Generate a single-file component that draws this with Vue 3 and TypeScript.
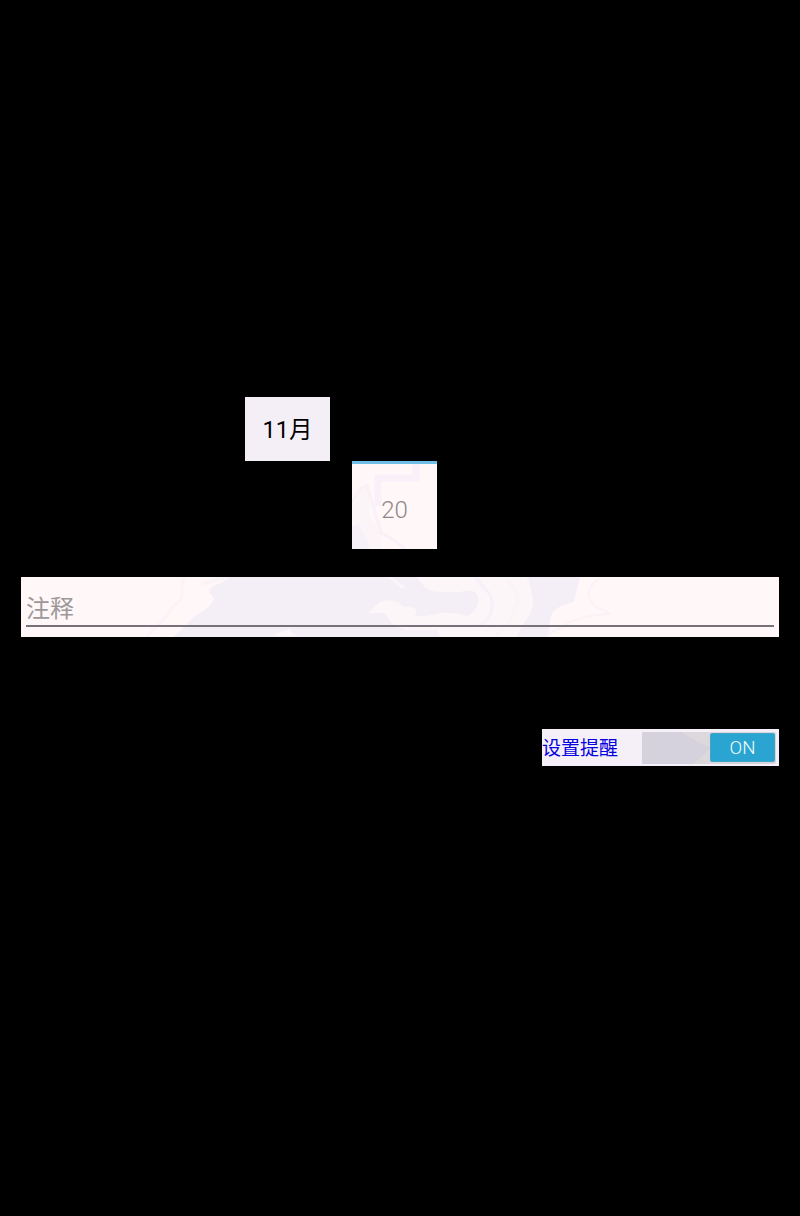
<script setup lang="ts">
import { ref } from 'vue'

const month = ref('11月')
const day = ref('20')
const note = ref('')
const reminder = ref(true)
</script>

<template>
  <main class="screen">
    <section class="pickers">
      <div class="month">{{ month }}</div>
      <div class="day">
        <svg class="art" width="85" height="85" viewBox="0 0 85 85" aria-hidden="true">
          <path d="M0 38C8 33 8 20 15 20C17 34 19 40 17 51C22 60 28 63 29 72L31 85H17L0 56Z" fill="#fcf5f8" />
          <path d="M26 42V14H64V0" fill="none" stroke="#f8f1f9" stroke-width="7" />
          <path d="M15 20C17 34 22 38 23 51C25 56 28 61 29 69C38 72 44 78 53 85" fill="none" stroke="#f8f1f8" stroke-width="3" />
          <path d="M0 38Q7 24 14 21" fill="none" stroke="#f8f1f8" stroke-width="2" />
          <path d="M0 62L6 60Q14 70 18 85H0Z" fill="#f6f0f8" />
        </svg>
        <span class="value">{{ day }}</span>
      </div>
    </section>

    <label class="note">
      <svg class="art" width="758" height="60" viewBox="0 0 758 60" aria-hidden="true">
        <path d="M152 60C163 51 169 43 174 39C182 34 189 31 193 22C193 17 183 17 191 10C199 6 205 4 207 0H507V60Z" fill="#f4eef7" />
        <path d="M163 0C157 13 166 20 155 27C148 31 151 36 143 42L125 60" fill="none" stroke="#fbf3f8" stroke-width="3" />
        <path d="M396 0C402 9 407 15 420 15H439C447 13 455 13 457 20C458 27 456 34 446 39C438 37 430 35 422 36C412 37 404 41 394 38C398 30 389 29 382 30C377 22 366 22 359 25L347 36C355 37 364 34 366 39C369 46 375 51 386 53H417L419 60H496L502 48Q515 30 511 18L506 0Z" fill="#fdf6f8" />
        <path d="M455 0C457 8 472 13 471 29C471 40 465 43 459 49" fill="none" stroke="#f6f0f8" stroke-width="3" />
        <path d="M486 0C487 7 503 19 495 29C491 38 492 41 486 48L475 58" fill="none" stroke="#faf3f8" stroke-width="3" />
        <path d="M507 0H559L554 20C555 28 543 25 534 33C527 39 530 49 527 60H496L503 46Q515 30 511 18Z" fill="#f4eef7" />
        <path d="M578 2C565 10 566 21 573 28C578 33 586 34 589 37C567 38 551 43 546 47L526 58" fill="none" stroke="#f9f2f7" stroke-width="2" />
        <path d="M251 59C258 54 266 55 269 51C269 56 272 57 276 59Z" fill="#fdf6f8" />
        <path d="M366 0H371L384 10L381 12Z" fill="#fbf4f8" />
        <path d="M181 7Q190 3 207 0" fill="none" stroke="#faf3f8" stroke-width="4" />
      </svg>
      <input v-model="note" class="input" type="text" placeholder="注释" />
    </label>

    <section class="reminder">
      <span class="caption">设置提醒</span>
      <button class="track" type="button" role="switch" :aria-checked="reminder" @click="reminder = !reminder">
        <svg class="art" width="134" height="32" viewBox="0 0 134 32" aria-hidden="true">
          <path d="M39 0H80V32H51L65 19L56 10Z" fill="#dcd8dc" />
          <path d="M39 0C44 5 50 5 55 10L69 16L51 32H0V0Z" fill="#d5d1dd" />
        </svg>
        <span class="thumb">{{ reminder ? 'ON' : 'OFF' }}</span>
      </button>
    </section>
  </main>
</template>

<style>
html,
body {
  background: #000;
}
</style>

<style scoped>
.screen {
  box-sizing: border-box;
  display: flex;
  flex-direction: column;
  height: 1216px;
  padding: 397px 21px 0;
  background: #000;
  font-family: Roboto, "Noto Sans CJK SC", sans-serif;
}

.pickers {
  display: grid;
  grid-template-columns: 85px 85px;
  grid-template-rows: 64px 88px;
  column-gap: 22px;
  margin-left: 224px;
}

.month {
  display: flex;
  box-sizing: border-box;
  align-items: center;
  justify-content: center;
  padding-top: 2px;
  background: #f4eef7;
  color: #000;
  font-size: 23.5px;
  line-height: 30px;
}

.day {
  position: relative;
  grid-area: 2 / 2;
  display: flex;
  box-sizing: border-box;
  align-items: center;
  justify-content: center;
  padding-top: 6px;
  border-top: 3px solid #70bde6;
  background: #fff7f8;
  color: #8e898b;
  font-size: 24px;
  font-weight: 300;
}

.art {
  position: absolute;
  top: 0;
  left: 0;
  display: block;
}

.value {
  position: relative;
}

.note {
  position: relative;
  display: block;
  box-sizing: border-box;
  height: 60px;
  margin-top: 28px;
  padding: 10px 5px;
  background: #fff7f8;
}

.input {
  position: relative;
  display: block;
  box-sizing: border-box;
  width: 100%;
  height: 40px;
  padding: 5px 0 0;
  border: 0;
  border-bottom: 2px solid #777279;
  outline: 0;
  background: transparent;
  color: #222;
  font: 24px Roboto, "Noto Sans CJK SC", sans-serif;
}

.input::placeholder {
  color: #9c9799;
  opacity: 1;
}

.reminder {
  display: flex;
  box-sizing: border-box;
  align-items: center;
  align-self: flex-end;
  justify-content: space-between;
  width: 237px;
  height: 37px;
  margin-top: 92px;
  padding-right: 3px;
  background: #f5eff7;
}

.caption {
  padding-top: 2px;
  color: #0400e0;
  font-size: 19px;
  line-height: 28px;
}

.track {
  position: relative;
  display: flex;
  align-items: center;
  justify-content: flex-end;
  width: 134px;
  height: 32px;
  padding: 0 1px 0 0;
  border: 0;
  border-radius: 2px;
  overflow: hidden;
  background: #d9d5dc;
}

.thumb {
  position: relative;
  box-sizing: border-box;
  width: 65px;
  height: 29px;
  border: 1px solid #41a5c6;
  border-radius: 2px;
  background: #2aa5d1;
  color: #f4fdff;
  font: 300 18.67px/28px Roboto, sans-serif;
  text-align: center;
}
</style>
